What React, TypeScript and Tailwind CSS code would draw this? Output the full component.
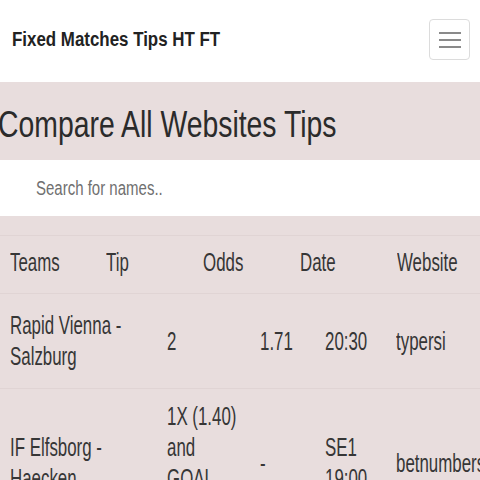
import React from 'react';

type Row = {
    teams: string[];
    tip: string[];
    odds: string;
    date: string[];
    site: string;
    pad: string;
};

const ROWS: Row[] = [
    { teams: ['Rapid Vienna -', 'Salzburg'], tip: ['2'], odds: '1.71', date: ['20:30'], site: 'typersi', pad: 'py-4' },
    { teams: ['IF Elfsborg -', 'Haecken'], tip: ['1X (1.40)', 'and', 'GOAL', '(1.60)'], odds: '-', date: ['SE1', '19:00'], site: 'betnumbers', pad: 'py-3' },
];

const HEADERS = ['Teams', 'Tip', 'Odds', 'Date', 'Website'];

// the screenshot's type is very condensed, so squeeze each text horizontally
const Narrow: React.FC<{ items: string[] }> = ({ items }) => (
    <div className="flex flex-col">
        {items.map((t, i) => (
            <span key={i} className="inline-block origin-left scale-x-[0.675] whitespace-nowrap">{t}</span>
        ))}
    </div>
);

const App: React.FC = () => {
    return (
        <div className="w-[480px] h-[480px] overflow-hidden bg-[#e8dddd] text-[#363636] font-['Liberation_Sans',Arial,sans-serif]">
            <nav className="h-[82px] bg-white flex items-center justify-between pl-3 pr-[10px]">
                <span className="inline-block origin-left scale-x-[0.845] whitespace-nowrap text-[20px] font-bold text-[#222] -mt-1">
                    Fixed Matches Tips HT FT
                </span>
                <button className="w-[41px] h-[41px] border border-[#dcdcdc] rounded-[4px] flex flex-col items-center justify-center gap-[5px] -mt-[3px]">
                    <span className="block w-[22px] h-[2px] bg-[#8a8a8a]" />
                    <span className="block w-[22px] h-[2px] bg-[#8a8a8a]" />
                    <span className="block w-[22px] h-[2px] bg-[#8a8a8a]" />
                </button>
            </nav>

            <div className="h-[78px] flex items-center pt-2 -ml-[2px]">
                <h1 className="inline-block origin-left scale-x-[0.788] whitespace-nowrap text-[36px] text-[#2b2b2b]">
                    Compare All Websites Tips
                </h1>
            </div>

            <div className="h-[56px] bg-white flex items-center pl-9">
                <input
                    type="text"
                    placeholder="Search for names.."
                    className="w-full origin-left scale-x-[0.75] bg-transparent outline-none text-[20px] placeholder:text-[#707070]"
                />
            </div>

            <div className="pt-[19px] text-[25px] leading-[31px]">
                <div className="grid grid-cols-[96px_97px_97px_97px_120px] border-t border-[#e0d4d4]">
                    {HEADERS.map((h) => (
                        <div key={h} className="pl-[10px] pt-[11px] pb-[15px]"><Narrow items={[h]} /></div>
                    ))}
                </div>
                {ROWS.map((r, i) => (
                    <div
                        key={i}
                        className="grid grid-cols-[157px_93px_65px_71px_120px] items-center border-t border-[#e0d4d4]"
                    >
                        <div className={`pl-[10px] ${r.pad}`}><Narrow items={r.teams} /></div>
                        <div className={`pl-[10px] ${r.pad}`}><Narrow items={r.tip} /></div>
                        <div className={`pl-[10px] ${r.pad}`}><Narrow items={[r.odds]} /></div>
                        <div className={`pl-[10px] ${r.pad}`}><Narrow items={r.date} /></div>
                        <div className={`pl-[10px] ${r.pad}`}><Narrow items={[r.site]} /></div>
                    </div>
                ))}
            </div>
        </div>
    );
};

export default App;
